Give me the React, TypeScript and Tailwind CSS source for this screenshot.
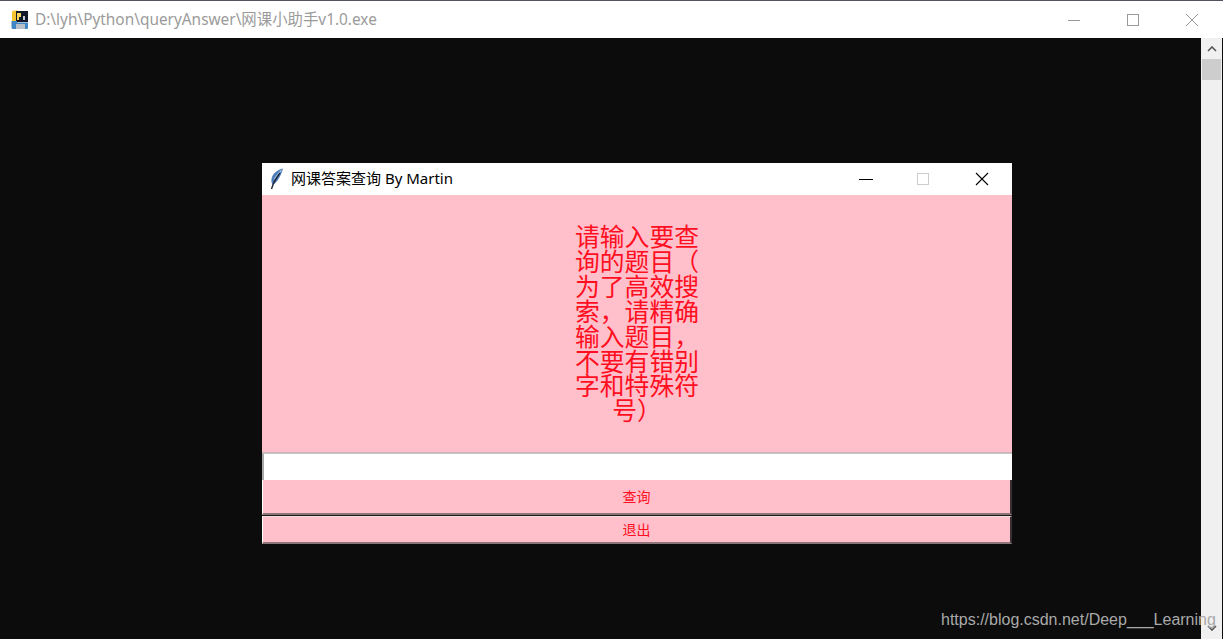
import React from 'react';

const uiFont = '"Noto Sans", "Noto Sans CJK SC", sans-serif';

const PyInstallerIcon = () => (
    <svg width="20" height="20" viewBox="0 0 20 20" className="shrink-0">
        <path d="M2 2.500C2 1 3 .5 4.500 .5H8v12H2z" fill="#f5c531" />
        <path d="M6 1h12v11H6z" fill="#10182a" />
        <path d="M7 3h4v4H9v3H7z" fill="#f6d558" />
        <path d="M13 6h2v4h-2z" fill="#c8ccd2" />
        <path d="M1.500 11H7v1.500h11V18a1 1 0 0 1-1 1H3a1.500 1.500 0 0 1-1.500-1.500z" fill="#3f86c4" />
        <rect x="6" y="14" width="9" height="5" fill="#b9bfc6" />
    </svg>
);

const Feather = () => (
    <svg width="14" height="22" viewBox="0 0 14 22" className="shrink-0">
        <path d="M13 .5C8 1.500 2.500 5 1.500 11c-.4 2.500.2 4.500 1 5.500 4-1.500 8-7 10.500-16z" fill="#4f7db8" />
        <path d="M11.500 2C8.500 6 6 8 4.500 11" stroke="#a9c6e6" strokeWidth="1.2" fill="none" />
        <path d="M10 5C6.500 9.500 3.500 14 1.500 21" stroke="#1c2436" strokeWidth="1.3" fill="none" />
    </svg>
);

const Question = () => (
    <p className="w-[126px] text-center text-[24.8px] leading-[24.9px] text-[#ff0f1f]">
        请输入要查<br />
        询的题目（<br />
        为了高效搜<br />
        索，请精确<br />
        输入题目，<br />
        不要有错别<br />
        字和特殊符<br />
        号）
    </p>
);

const TkButton = ({label, className}: {label: string; className: string}) => (
    <button
        className={`block w-full shrink-0 bg-[#ffc0cb] border-l border-l-white border-r-2 border-r-[#3a3034] border-b-2 border-b-[#8d7479] text-[14px] text-[#ff0f1f] ${className}`}
    >
        {label}
    </button>
);

const TkWindow = () => (
    <div className="w-[750px] h-[381px] flex flex-col">
        <div className="h-[32px] shrink-0 bg-white flex items-center">
            <div className="ml-[8px]"><Feather /></div>
            <span className="ml-[7px] pb-[2px] text-[15px] text-black">网课答案查询 By Martin</span>
            <div className="ml-auto flex items-center">
                <svg width="14" height="14" viewBox="0 0 14 14" className="mr-[44px]">
                    <path d="M0 7.500h14" stroke="#000" strokeWidth="1" />
                </svg>
                <svg width="12" height="12" viewBox="0 0 12 12" className="mr-[46px]">
                    <rect x=".5" y=".5" width="11" height="11" fill="none" stroke="#cccccc" />
                </svg>
                <svg width="14" height="14" viewBox="0 0 14 14" className="mr-[23px]">
                    <path d="M1 1l12 12M13 1L1 13" stroke="#000" strokeWidth="1.1" />
                </svg>
            </div>
        </div>
        <div className="h-[258px] shrink-0 bg-[#ffc0cb] flex justify-center pt-[29px] border-b border-b-[#c9b0b5]">
            <Question />
        </div>
        <div className="h-[27px] shrink-0 bg-white border-l-2 border-l-[#a8a8a8] border-t border-t-[#c8c8c8]"></div>
        <TkButton label="查询" className="h-[35px]" />
        <div className="h-px shrink-0 bg-[#1a1a1a]"></div>
        <TkButton label="退出" className="h-[28px] border-t border-t-[#f0dde1]" />
    </div>
);

const App = () => {
    return (
        <div className="w-[1223px] h-[639px] overflow-hidden flex flex-col bg-[#0c0c0c]" style={{fontFamily: uiFont}}>
            <div className="h-px bg-[#55525e] shrink-0"></div>
            <div className="h-[37px] shrink-0 bg-white flex items-center pl-[10px]">
                <PyInstallerIcon />
                <span className="ml-[5px] text-[15.4px] text-[#9b9b9b]">D:\lyh\Python\queryAnswer\网课小助手v1.0.exe</span>
                <div className="ml-auto flex items-center">
                    <svg width="12" height="12" viewBox="0 0 12 12" className="mr-[47px]">
                        <path d="M0 6.500h12" stroke="#999" strokeWidth="1" />
                    </svg>
                    <svg width="12" height="12" viewBox="0 0 12 12" className="mr-[47px]">
                        <rect x=".5" y=".5" width="11" height="11" fill="none" stroke="#999" />
                    </svg>
                    <svg width="12" height="12" viewBox="0 0 12 12" className="mr-[25px]">
                        <path d="M0 0l12 12M12 0L0 12" stroke="#999" strokeWidth="1" />
                    </svg>
                </div>
            </div>
            <div className="flex-1 flex min-h-0 relative">
                <div className="flex-1 pl-[262px] pt-[125px] bg-[#0c0c0c]">
                    <TkWindow />
                </div>
                <div className="w-[21px] mr-px bg-[#f0f0f0] flex flex-col items-center">
                    <svg width="10" height="6" viewBox="0 0 10 6" className="mt-[8px]">
                        <path d="M1 5l4-4 4 4" stroke="#555" strokeWidth="1.6" fill="none" />
                    </svg>
                    <div className="mt-[7px] w-[19px] h-[21px] bg-[#cdcdcd]"></div>
                    <svg width="10" height="6" viewBox="0 0 10 6" className="mt-auto mb-[8px]">
                        <path d="M1 1l4 4 4-4" stroke="#555" strokeWidth="1.6" fill="none" />
                    </svg>
                </div>
                <span
                    className="absolute left-[941px] top-[572px] text-[16px] leading-[20px] text-[#a9a9a9] whitespace-nowrap"
                    style={{fontFamily: '"Liberation Sans", sans-serif'}}
                >
                    https://blog.csdn.net/Deep___Learning
                </span>
            </div>
        </div>
    );
};

export default App;
